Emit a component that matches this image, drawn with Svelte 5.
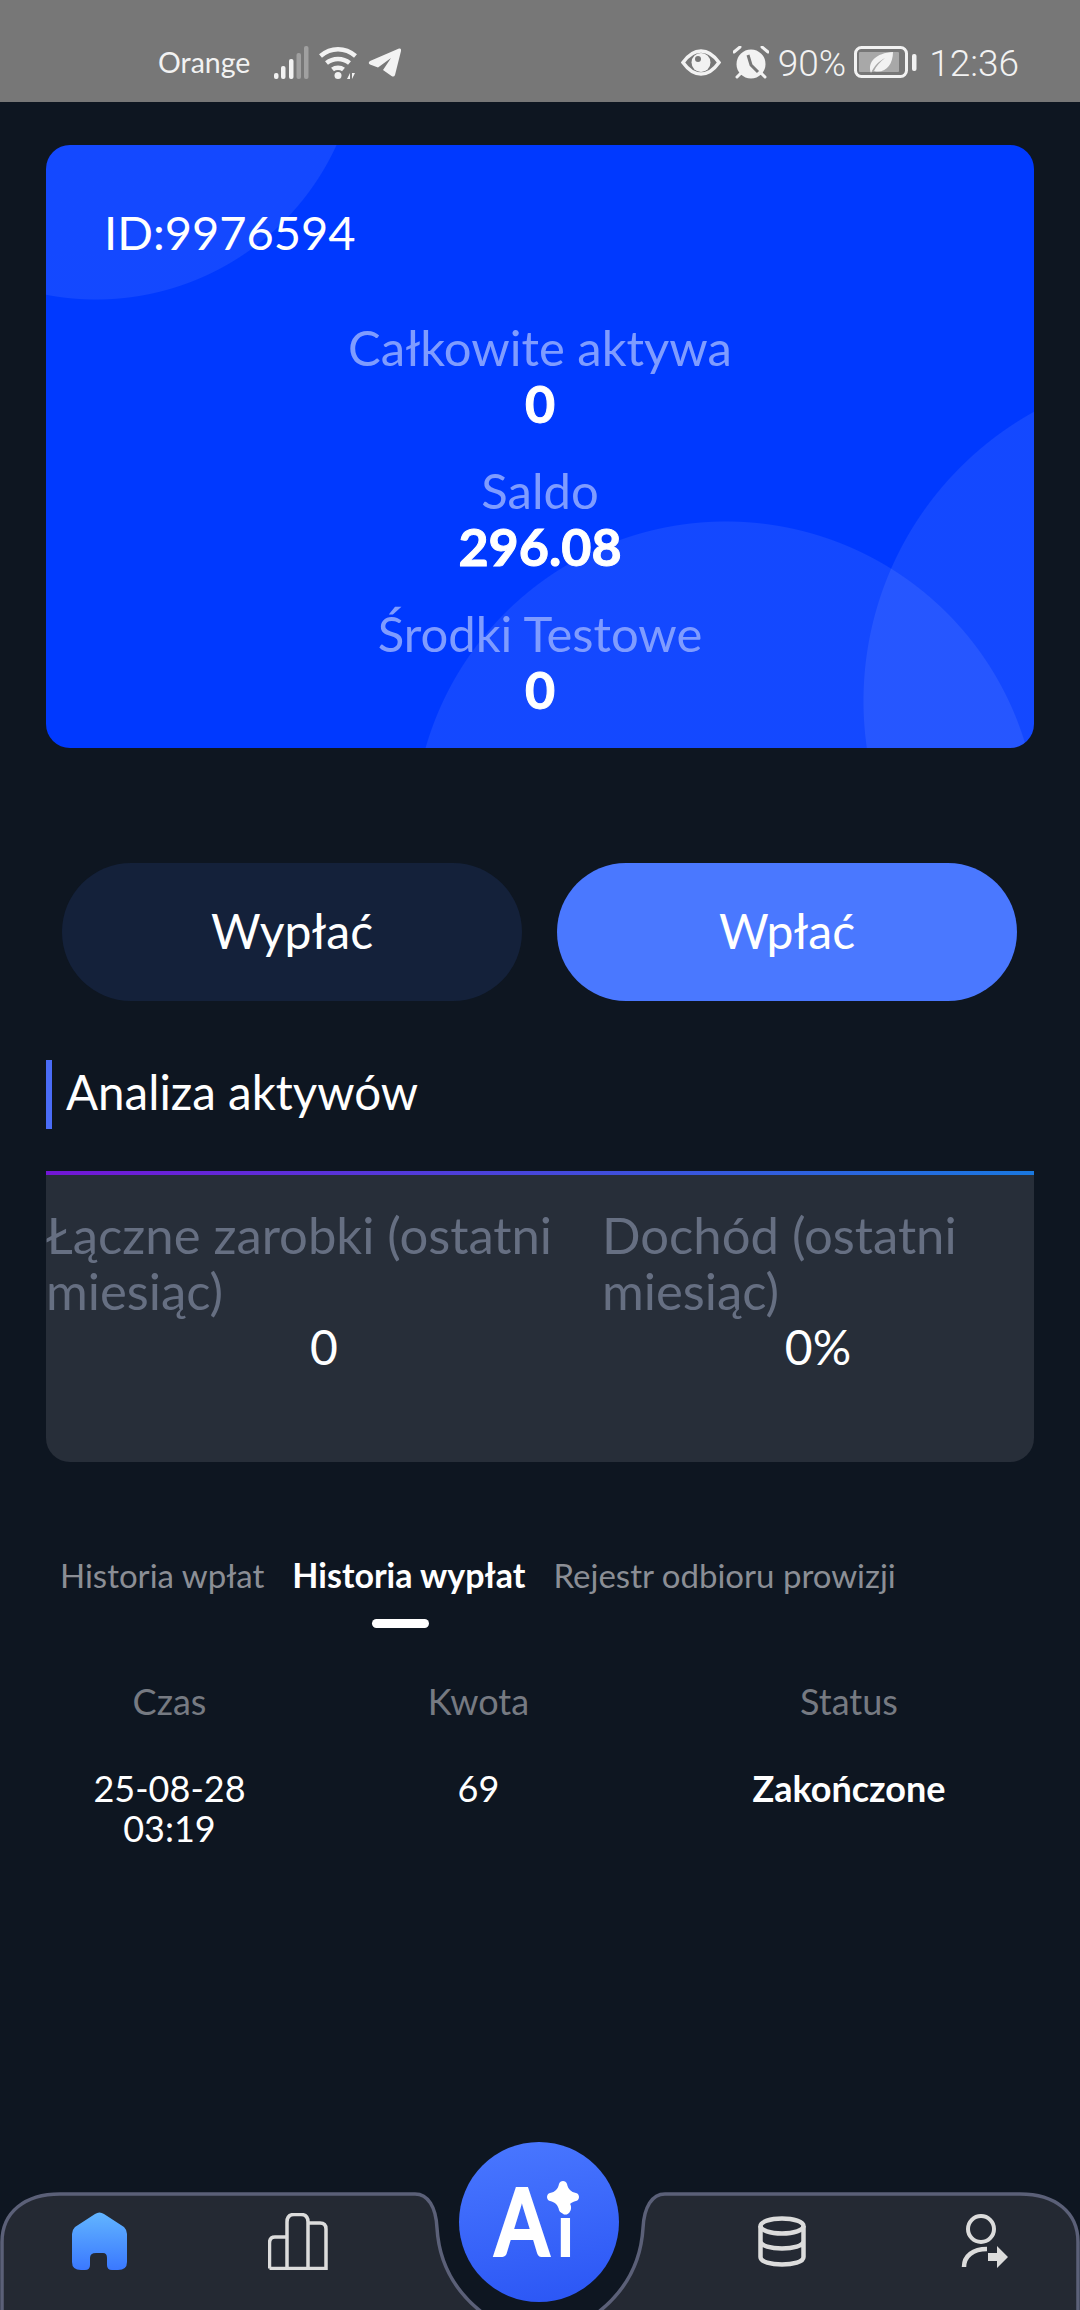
<script>
  const stats = [
    { label: "Całkowite aktywa", value: "0" },
    { label: "Saldo", value: "296.08" },
    { label: "Środki Testowe", value: "0" }
  ]
  const tabs = ["Historia wpłat", "Historia wypłat", "Rejestr odbioru prowizji"]
  let active_tab = 1
</script>

<main class="page">
  <div class="status-bar">
    <div class="status-left">
      <span class="carrier">Orange</span>
      <svg class="signal" width="35" height="33" viewBox="0 0 35 33">
        <rect x="0" y="27" width="4.5" height="6" rx="2" fill="#f2f2f2" />
        <rect x="7" y="20" width="4.5" height="13" rx="2" fill="#f2f2f2" />
        <rect x="15" y="13" width="4.5" height="20" rx="2" fill="#f2f2f2" />
        <rect x="22.5" y="7" width="4.5" height="26" rx="2" fill="#a0a0a0" />
        <rect x="30" y="0" width="4.5" height="33" rx="2" fill="#a0a0a0" />
      </svg>
      <svg class="wifi" width="40" height="33" viewBox="0 0 40 33">
        <path d="M1.5 10C12 1 26 1 36.5 10M7.5 17C14 11.5 24 11.5 30.5 17M13.5 23.5C16.5 21 21.5 21 24.5 23.5" fill="none" stroke="#f2f2f2" stroke-width="4.5" />
        <circle cx="19" cy="29.5" r="3.5" fill="#f2f2f2" />
        <path d="M28 33h3v-6ZM33 27v6l3-6Z" fill="#f2f2f2" />
      </svg>
      <svg width="33" height="29" viewBox="0 0 33 29">
        <path d="M31 0.5Q33.5 0 33 3L27 27Q26 29.5 23.5 28L15 22 23 10 10 19.5 2 16.5Q-0.5 15 2 13Z" fill="#f2f2f2" />
      </svg>
    </div>
    <div class="status-right">
      <svg class="eye" width="40" height="27" viewBox="0 0 40 27">
        <path d="M2 13.5C8 5 14 2 20 2s12 3 18 11.5C32 22 26 25 20 25S8 22 2 13.5Z" fill="none" stroke="#f2f2f2" stroke-width="3.5" />
        <circle cx="20" cy="13.5" r="9.5" fill="#f2f2f2" />
        <circle cx="17" cy="10" r="3" fill="#777" />
      </svg>
      <svg class="alarm" width="36" height="33" viewBox="0 0 36 33">
        <path d="M1 6 7 1M35 6 29 1M4 31 8 27M32 31 28 27" stroke="#f2f2f2" stroke-width="3" stroke-linecap="round" />
        <circle cx="18" cy="18" r="14.5" fill="#f2f2f2" />
        <path d="M15 9 18 19 25 26" fill="none" stroke="#777" stroke-width="3" />
      </svg>
      <span class="pct">90%</span>
      <svg class="battery" width="63" height="32" viewBox="0 0 63 32">
        <rect x="1.5" y="1.5" width="51" height="29" rx="6" fill="none" stroke="#f2f2f2" stroke-width="3" />
        <rect x="5" y="6" width="40" height="20" rx="1" fill="#a8a8a8" />
        <path d="M17 27C13 16 22 7 39 6 39 19 31 28 20 25 22 20 26 16 31 12 25 15 20 20 17 27Z" fill="#f2f2f2" />
        <rect x="58" y="8" width="4.5" height="17" rx="2" fill="#f2f2f2" />
      </svg>
      <span class="clock">12:36</span>
    </div>
  </div>

  <section class="card">
    <div class="id">ID:9976594</div>
    {#each stats as s}
      <div class="stat">
        <div class="stat-label">{s.label}</div>
        <div class="stat-value">{s.value}</div>
      </div>
    {/each}
  </section>

  <div class="actions">
    <button class="btn dark">Wypłać</button>
    <button class="btn blue">Wpłać</button>
  </div>

  <h2 class="title">Analiza aktywów</h2>

  <section class="analysis">
    <div class="col">
      <div class="col-label">Łączne zarobki (ostatni miesiąc)</div>
      <div class="col-value">0</div>
    </div>
    <div class="col">
      <div class="col-label">Dochód (ostatni miesiąc)</div>
      <div class="col-value">0%</div>
    </div>
  </section>

  <div class="tabs">
    {#each tabs as t, i}
      <span class="tab" class:active={i === active_tab}>{t}</span>
    {/each}
  </div>
  <div class="indicator"></div>

  <div class="table">
    <div class="th">Czas</div>
    <div class="th">Kwota</div>
    <div class="th">Status</div>
    <div class="td">25-08-28<br />03:19</div>
    <div class="td">69</div>
    <div class="td strong">Zakończone</div>
  </div>

  <nav class="nav">
    <svg class="nav-bg" width="1080" height="118" viewBox="0 0 1080 118">
      <path d="M2 122V50C2 20 25 2 60 2H415C428 2 436 15 437 36C439 70 455 100 484 122" fill="#242933" stroke="#5b6078" stroke-width="3.5" />
      <path d="M1078 122V50C1078 20 1055 2 1020 2H665C652 2 644 15 643 36C641 70 625 100 596 122" fill="#242933" stroke="#5b6078" stroke-width="3.5" />
    </svg>
    <div class="nav-side">
      <svg width="55" height="58" viewBox="0 0 55 58">
        <defs>
          <linearGradient id="home" x1="0" y1="0" x2="0" y2="1">
            <stop offset="0" stop-color="#62b5ff" />
            <stop offset="1" stop-color="#3a78ff" />
          </linearGradient>
        </defs>
        <path d="M23 2Q27.5-1 32 2L52 15Q55 18 55 22V50Q55 58 46 58H40Q35 58 35 53V46Q35 41 31 41H24Q18 41 18 46V53Q18 58 13 58H9Q0 58 0 50V22Q0 18 3 15Z" fill="url(#home)" />
      </svg>
      <svg width="60" height="57" viewBox="0 0 60 57">
        <path d="M1.5 55.5V30Q1.5 24 7 24H19M19 55.5V9Q19 1.5 26 1.5H33Q40 1.5 40 9V55.5M40 10H52Q58 10 58 16V55.5H1.5" fill="none" stroke="#dcdcdc" stroke-width="3.5" />
      </svg>
    </div>
    <button class="ai">
      <span class="ai-text">A<span class="ai-i">i</span></span>
      <svg class="spark" width="32" height="32" viewBox="0 0 32 32">
        <path d="M12 3C13 -1 19 -1 20 3 21 8 24 11 29 12 33 13 33 19 29 20 24 21 21 24 20 29 19 33 13 33 12 29 11 24 8 21 3 20-1 19-1 13 3 12 8 11 11 8 12 3Z" fill="#fff" />
      </svg>
    </button>
    <div class="nav-side right">
      <svg width="48" height="51" viewBox="0 0 48 51">
        <ellipse cx="24" cy="10" rx="21.5" ry="7.5" fill="none" stroke="#dcdcdc" stroke-width="4.5" />
        <path d="M2.5 10V41C2.5 51 45.5 51 45.5 41V10M2.5 25C2.5 35 45.5 35 45.5 25" fill="none" stroke="#dcdcdc" stroke-width="4.5" />
      </svg>
      <svg width="47" height="54" viewBox="0 0 47 54">
        <circle cx="20" cy="15" r="13" fill="none" stroke="#dcdcdc" stroke-width="4" />
        <path d="M3 53C3 42 12 35 26 35" fill="none" stroke="#dcdcdc" stroke-width="4.5" />
        <path d="M27 39H36V32L47 43 36 54V47H27Z" fill="#dcdcdc" />
      </svg>
    </div>
  </nav>
</main>

<style>
  :global(body) {
    margin: 0;
    background: #0e1621;
  }

  .page {
    width: 1080px;
    height: 2310px;
    display: flex;
    flex-direction: column;
    font-family: "Lato", "Liberation Sans", sans-serif;
    color: #fff;
    overflow: hidden;
  }

  .status-bar {
    height: 102px;
    background: #777;
    box-sizing: border-box;
    padding: 44px 61px 0 158px;
    display: flex;
    justify-content: space-between;
    color: #f2f2f2;
    flex: none;
  }

  .status-left,
  .status-right {
    display: flex;
    align-items: center;
    height: 36px;
  }

  .carrier {
    font-size: 28.5px;
    width: 116px;
  }

  .signal { margin-right: 10px; }
  .wifi { margin-right: 9px; }

  .eye { margin-right: 12px; }
  .alarm { margin-right: 9px; }
  .battery { margin: 0 12px 0 8px; }

  .pct,
  .clock {
    font-family: "Roboto", sans-serif;
    font-size: 37px;
    font-weight: 300;
    padding-top: 2px;
  }

  .card {
    margin: 43px 46px 0;
    height: 603px;
    box-sizing: border-box;
    border-radius: 24px;
    padding: 57px 0 0;
    background:
      radial-gradient(circle at 1148px 556px, rgba(255,255,255,0.08) 330px, transparent 331px),
      radial-gradient(circle at 680px 689px, rgba(255,255,255,0.08) 312px, transparent 313px),
      radial-gradient(circle at 50px -110px, rgba(255,255,255,0.08) 264px, transparent 265px),
      #0039ff;
    flex: none;
  }

  .id {
    font-size: 47px;
    line-height: 60px;
    padding-left: 58px;
    margin-bottom: 57px;
  }

  .stat {
    text-align: center;
    margin-bottom: 31px;
  }

  .stat-label {
    font-size: 49px;
    line-height: 56px;
    color: #7f9cff;
  }

  .stat-value {
    font-size: 52px;
    font-weight: 700;
    line-height: 56px;
    -webkit-text-stroke: 1px #fff;
  }

  .actions {
    display: flex;
    justify-content: space-between;
    margin: 115px 63px 0 62px;
    flex: none;
  }

  .btn {
    width: 460px;
    height: 138px;
    border: none;
    border-radius: 69px;
    color: #fff;
    font: inherit;
    font-size: 48px;
    padding: 0 0 4px;
  }

  .dark { background: #14213a; }
  .blue { background: #4a78ff; }

  .title {
    margin: 59px 46px 0;
    height: 69px;
    border-left: 6px solid #4a6cf7;
    padding-left: 14px;
    font-size: 47.5px;
    font-weight: 400;
    line-height: 64px;
    flex: none;
  }

  .analysis {
    margin: 42px 46px 0;
    height: 291px;
    box-sizing: border-box;
    background: #272e39;
    border-top: 4px solid;
    border-image: linear-gradient(90deg, #7316d6, #1978e0) 1;
    display: flex;
    padding-top: 32px;
    flex: none;
    clip-path: inset(0 round 0 0 24px 24px);
  }

  .col {
    box-sizing: border-box;
  }

  .col:first-child { width: 556px; }
  .col:last-child { width: 432px; }

  .col-label {
    font-size: 50.8px;
    line-height: 56px;
    color: #666f82;
  }

  .col-value {
    font-size: 48px;
    line-height: 56px;
    text-align: center;
  }

  .tabs {
    display: flex;
    gap: 28px;
    margin: 90px 0 0 60px;
    font-size: 33px;
    line-height: 46px;
    color: #8b8e95;
    flex: none;
    white-space: nowrap;
  }

  .tab.active {
    color: #fff;
    font-size: 34px;
    font-weight: 700;
  }

  .indicator {
    width: 57px;
    height: 9px;
    border-radius: 5px;
    background: #fff;
    margin: 21px 0 0 372px;
    flex: none;
  }

  .table {
    display: grid;
    grid-template-columns: 339px 279px 1fr;
    margin-top: 53px;
    text-align: center;
    flex: none;
    font-size: 36px;
    line-height: 40px;
  }

  .th {
    color: #767a82;
    margin-bottom: 47px;
  }

  .strong { font-weight: 700; }

  .nav {
    position: relative;
    margin-top: auto;
    height: 118px;
    display: flex;
    justify-content: space-between;
    flex: none;
  }

  .nav-bg {
    position: absolute;
    left: 0;
    top: 0;
  }

  .nav-side {
    position: relative;
    display: flex;
    height: 58px;
    padding: 20px 0 0 72px;
    gap: 141px;
    align-items: center;
    width: 368px;
  }

  .nav-side.right {
    padding-left: 118px;
    width: 322px;
    gap: 155px;
  }

  .ai {
    position: absolute;
    left: 459px;
    top: -50px;
    width: 160px;
    height: 160px;
    border: none;
    border-radius: 50%;
    background: linear-gradient(170deg, #4a78ff, #2a55f5);
    color: #fff;
    padding: 0 10px 0 0;
  }

  .ai-text {
    display: inline-block;
    font-family: "Lato", sans-serif;
    font-size: 94px;
    font-weight: 700;
    line-height: 90px;
    transform: scaleX(0.84);
    padding-top: 4px;
    -webkit-text-stroke: 2px #fff;
  }

  .ai-i {
    font-size: 72px;
    margin-left: 10px;
  }

  .spark {
    position: absolute;
    left: 88px;
    top: 39px;
  }
</style>
